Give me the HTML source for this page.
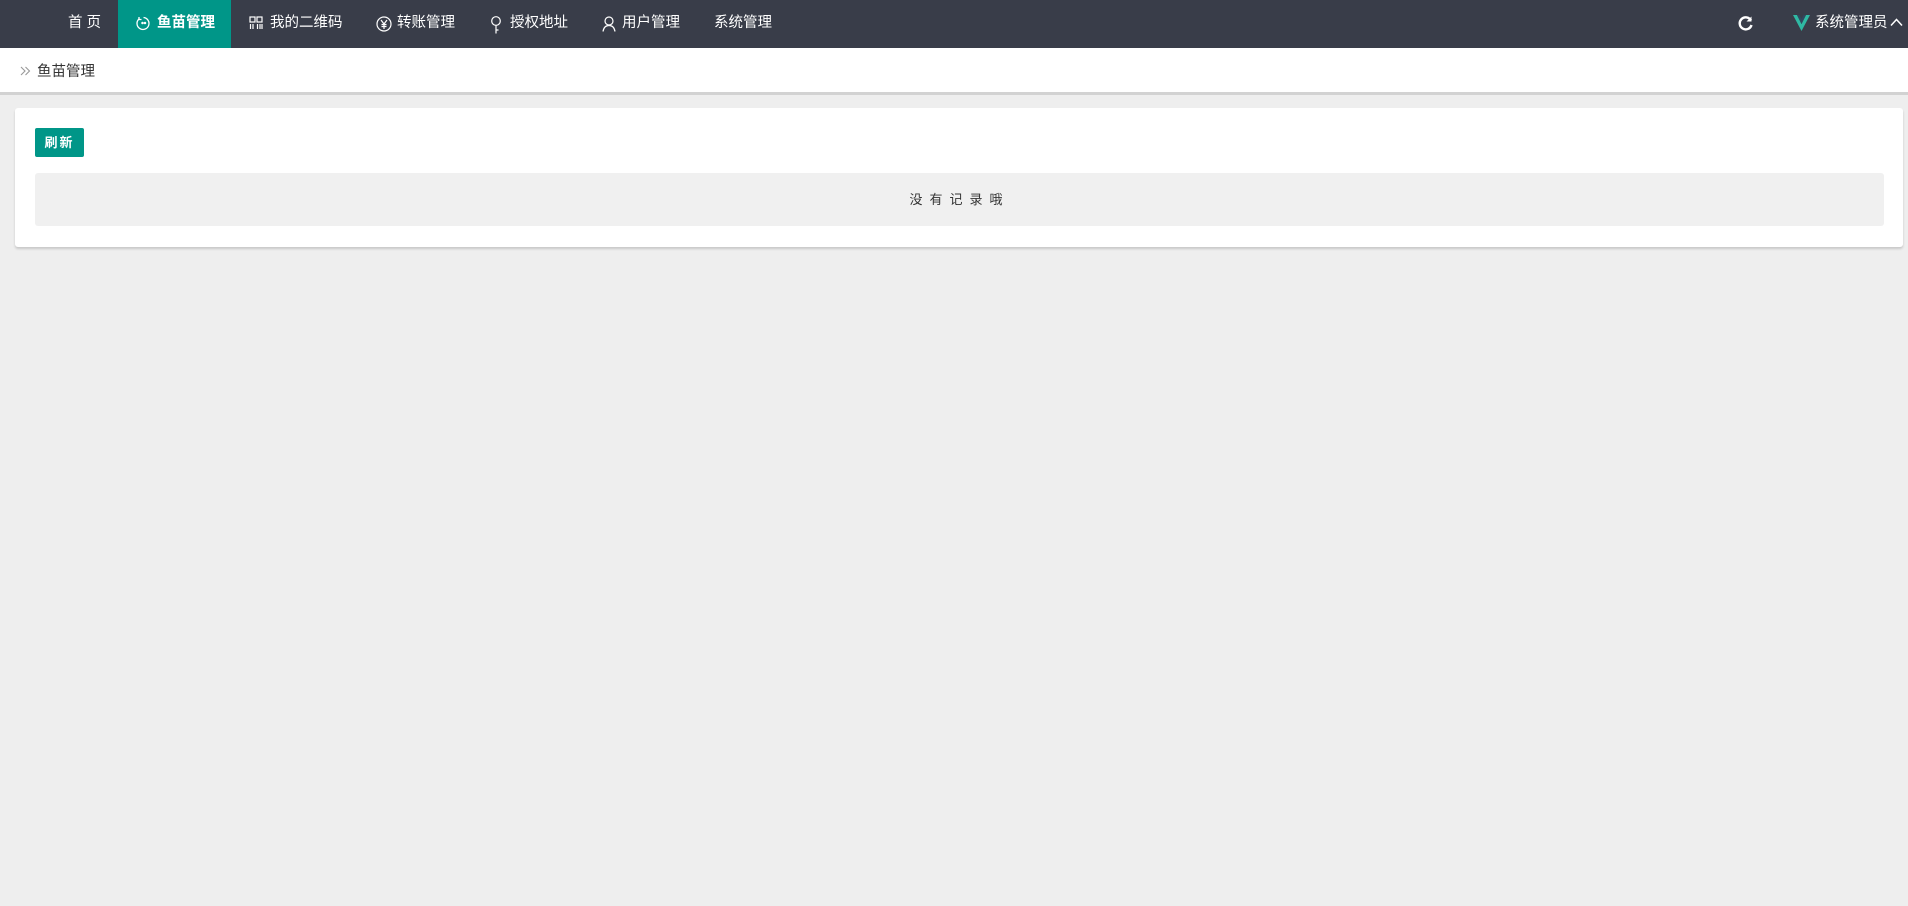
<!DOCTYPE html>
<html><head><meta charset="utf-8"><style>
*{margin:0;padding:0;box-sizing:border-box}
body{width:1908px;height:906px;background:#eeeeee;font-family:"Liberation Sans","Noto Sans CJK SC",sans-serif;position:relative;overflow:hidden}
.nav{position:absolute;left:0;top:0;width:1908px;height:48px;background:#393d49;color:#fff;font-size:14.5px}
.nav .t{position:absolute;top:0;line-height:46px;white-space:nowrap}
.act{position:absolute;left:118px;top:0;width:113px;height:48px;background:#009688}
.nav svg{position:absolute;top:16px}
.bc{position:absolute;left:0;top:48px;width:1908px;height:47px;background:#fff;border-bottom:3px solid #d2d2d2;font-size:14.5px;color:#333}
.card{position:absolute;left:15px;top:108px;width:1888px;height:139px;background:#fff;border-radius:3px;box-shadow:0 2px 2px #c8c8c8}
.btn{position:absolute;left:20px;top:20px;width:49px;height:29px;background:#009688;color:#fff;font-size:13px;font-weight:bold;text-align:center;line-height:29px;border-radius:2px;letter-spacing:2px}
.empty{position:absolute;left:20px;top:65px;width:1849px;height:53px;background:#f0f0f0;border-radius:3px;text-align:center;line-height:53px;font-size:13px;color:#333;letter-spacing:7px}
</style></head><body>
<div class="nav">
<div class="act"></div>
<div class="t" style="left:68px">首 页</div>
<svg style="left:136px" width="15" height="15" viewBox="0 0 15 15" fill="none" stroke="#fff" stroke-width="1.3"><path d="M3 3A6 6 0 1 0 7.5 1.5"/><path d="M3 1v2.5h2.5"/><circle cx="6.5" cy="7" r=".6" fill="#fff"/><circle cx="9" cy="7" r=".6" fill="#fff"/></svg>
<div class="t" style="left:157px;font-weight:bold">鱼苗管理</div>
<svg style="left:249px" width="14" height="14" viewBox="0 0 14 14" fill="none" stroke="#fff" stroke-width="1.2"><rect x="1" y="1" width="5" height="5"/><rect x="8" y="1" width="5" height="5"/><path d="M1.5 8v5M4 8v5M8.5 8v5M11 8v5M13 8v5"/></svg>
<div class="t" style="left:270px">我的二维码</div>
<svg style="left:376px" width="16" height="16" viewBox="0 0 16 16" fill="none" stroke="#fff" stroke-width="1.2"><circle cx="8" cy="8" r="7"/><path d="M5 4l3 4 3-4M8 8v5M5.5 8.5h5M5.5 10.5h5"/></svg>
<div class="t" style="left:397px">转账管理</div>
<svg style="left:490px" width="12" height="18" viewBox="0 0 12 18" fill="none" stroke="#fff" stroke-width="1.2"><circle cx="6" cy="5" r="4.3"/><path d="M6 9.5v8M6 14h2.5"/></svg>
<div class="t" style="left:510px">授权地址</div>
<svg style="left:602px" width="14" height="16" viewBox="0 0 14 16" fill="none" stroke="#fff" stroke-width="1.2"><circle cx="7" cy="5" r="4"/><path d="M1 15.5Q2 9.5 7 9.5T13 15.5"/></svg>
<div class="t" style="left:622px">用户管理</div>
<div class="t" style="left:714px">系统管理</div>
<svg style="left:1738px;top:15px" width="16" height="16" viewBox="0 0 16 16" fill="none" stroke="#fff" stroke-width="2.4"><path d="M13 5.5A6 6 0 1 0 13.5 10"/><path d="M13.5 1.5v5h-5" stroke-width="0" fill="#fff"/></svg>
<svg style="left:1793px;top:15px" width="17" height="16" viewBox="0 0 17 16"><path d="M0 0h4l4.5 9L13 0h4L8.5 16z" fill="#2fb9a3"/><path d="M4 0h2.5l2 4 2-4H13L8.5 9z" fill="#31475e"/></svg>
<div class="t" style="left:1815px">系统管理员</div>
<svg style="left:1890px;top:18px" width="13" height="9" viewBox="0 0 13 9" fill="none" stroke="#fff" stroke-width="1.5"><path d="M1 7.5l5.5-6 5.5 6"/></svg>
</div>
<div class="bc"><svg style="position:absolute;left:20px;top:18px" width="11" height="10" viewBox="0 0 11 10" fill="none" stroke="#999" stroke-width="1.1"><path d="M1 1l4 4-4 4M5.5 1l4 4-4 4"/></svg><span style="position:absolute;left:37px;top:12px">鱼苗管理</span></div>
<div class="card"><div class="btn">刷新</div><div class="empty">没有记录哦</div></div>
</body></html>
